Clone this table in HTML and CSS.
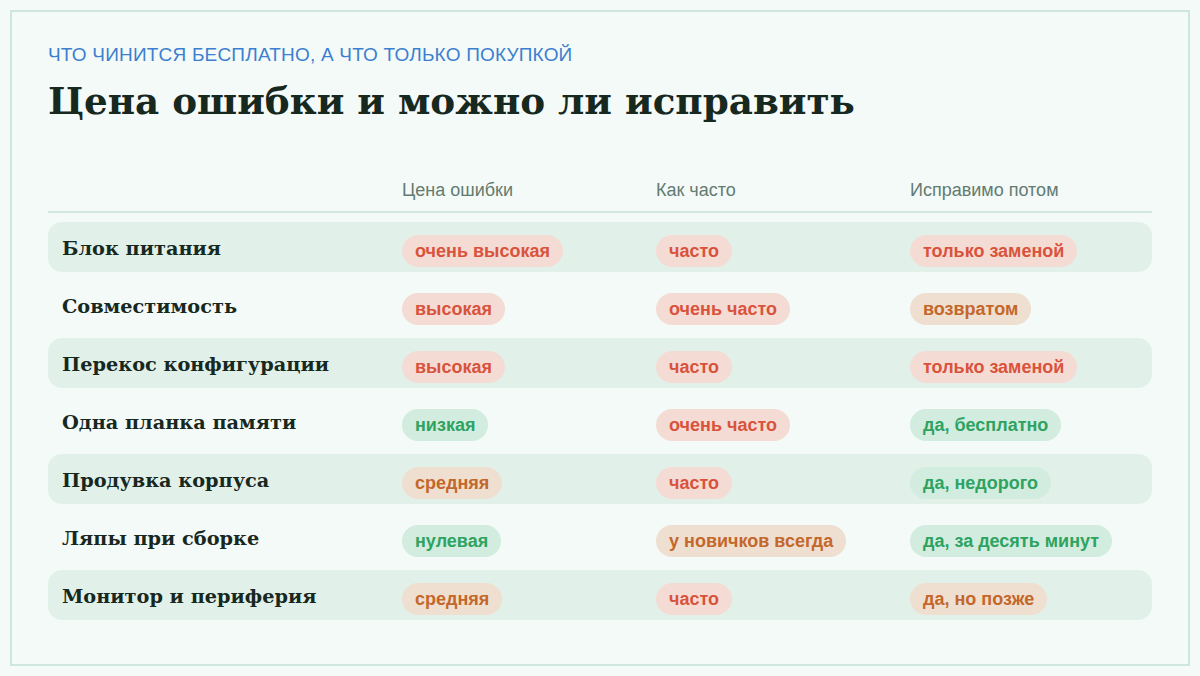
FILE: index.html
```html
<!DOCTYPE html>
<html lang="ru">
<head>
<meta charset="utf-8">
<link rel="stylesheet" href="styles.css">
</head>
<body>
<div class="frame">
  <div class="eyebrow">ЧТО ЧИНИТСЯ БЕСПЛАТНО, А ЧТО ТОЛЬКО ПОКУПКОЙ</div>
  <h1 class="title">Цена ошибки и можно ли исправить</h1>
  <div class="table">
    <div class="head">
      <div></div>
      <div>Цена ошибки</div>
      <div>Как часто</div>
      <div>Исправимо потом</div>
    </div>
    <div class="row alt">
      <div class="name">Блок питания</div>
      <div><span class="pill red">очень высокая</span></div>
      <div><span class="pill red">часто</span></div>
      <div><span class="pill red">только заменой</span></div>
    </div>
    <div class="row">
      <div class="name">Совместимость</div>
      <div><span class="pill red">высокая</span></div>
      <div><span class="pill red">очень часто</span></div>
      <div><span class="pill orange">возвратом</span></div>
    </div>
    <div class="row alt">
      <div class="name">Перекос конфигурации</div>
      <div><span class="pill red">высокая</span></div>
      <div><span class="pill red">часто</span></div>
      <div><span class="pill red">только заменой</span></div>
    </div>
    <div class="row">
      <div class="name">Одна планка памяти</div>
      <div><span class="pill green">низкая</span></div>
      <div><span class="pill red">очень часто</span></div>
      <div><span class="pill green">да, бесплатно</span></div>
    </div>
    <div class="row alt">
      <div class="name">Продувка корпуса</div>
      <div><span class="pill orange">средняя</span></div>
      <div><span class="pill red">часто</span></div>
      <div><span class="pill green">да, недорого</span></div>
    </div>
    <div class="row">
      <div class="name">Ляпы при сборке</div>
      <div><span class="pill green">нулевая</span></div>
      <div><span class="pill orange">у новичков всегда</span></div>
      <div><span class="pill green">да, за десять минут</span></div>
    </div>
    <div class="row alt">
      <div class="name">Монитор и периферия</div>
      <div><span class="pill orange">средняя</span></div>
      <div><span class="pill red">часто</span></div>
      <div><span class="pill orange">да, но позже</span></div>
    </div>
  </div>
</div>
</body>
</html>
```

FILE: styles.css
```css
* { box-sizing: border-box; }
html, body {
  margin: 0;
  padding: 0;
  background: #f3faf7;
}
body {
  padding: 10px;
  font-family: "Liberation Sans", Arial, sans-serif;
}
.frame {
  width: 1180px;
  height: 656px;
  border: 2px solid #cfe6dd;
  background: #f3faf7;
  padding: 32px 36px 0 36px;
}
.eyebrow {
  color: #3c7fd0;
  font-size: 19px;
  line-height: 22px;
  letter-spacing: 0.2px;
}
.title {
  margin: 10px 0 0 0;
  font-family: "DejaVu Serif", "Liberation Serif", serif;
  font-weight: bold;
  font-size: 37.3px;
  line-height: 50px;
  color: #17281f;
}
.table {
  margin-top: 53px;
  width: 1104px;
}
.head, .row {
  display: grid;
  grid-template-columns: 354px 254px 254px 1fr;
  align-items: center;
}
.head {
  color: #647a71;
  font-size: 18px;
  line-height: 22px;
  padding-bottom: 10px;
  border-bottom: 2px solid #d1e7df;
  margin-bottom: 9px;
}
.row {
  height: 50px;
  border-radius: 14px;
  margin-bottom: 8px;
}
.row.alt { background: #e1f1e9; }
.name {
  padding-left: 14px;
  padding-top: 3px;
  font-family: "DejaVu Serif", "Liberation Serif", serif;
  font-weight: bold;
  font-size: 19.3px;
  color: #17281f;
}
.pill {
  display: inline-block;
  height: 32px;
  line-height: 33px;
  padding: 0 13px;
  border-radius: 16px;
  font-weight: bold;
  font-size: 18px;
  margin-top: 8px;
}
.red { background: #f4dcd5; color: #d9533c; }
.orange { background: #efdfd1; color: #c3672a; }
.green { background: #d2ecdf; color: #2ea35f; }
```
